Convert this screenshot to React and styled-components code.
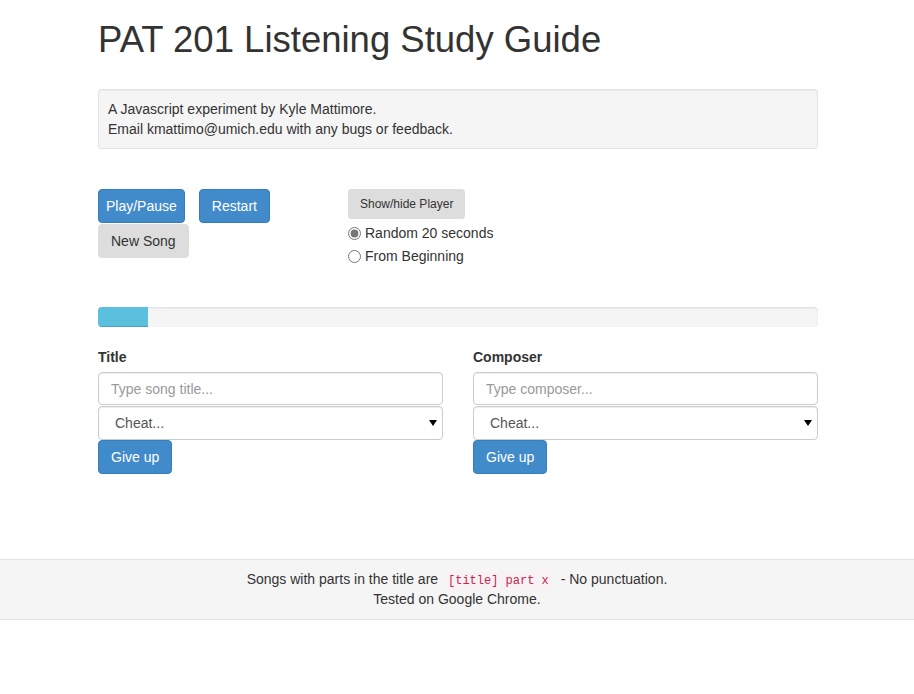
import React from "react";
import styled, { createGlobalStyle } from "styled-components";

const Global = createGlobalStyle`
  html, body { margin: 0; padding: 0; background: #fff; }
  body {
    font-family: "Liberation Sans", Arial, sans-serif;
    font-size: 14px;
    line-height: 1.428571;
    color: #333;
  }
  * { box-sizing: border-box; }
`;

const Container = styled.div`
  width: 720px;
  margin-left: calc(50% - 359px);
`;

const Title = styled.h1`
  font-size: 36.5px;
  font-weight: 500;
  line-height: 40px;
  margin: 20px 0 0;
  color: #333;
`;

const Well = styled.div`
  margin-top: 29px;
  padding: 9px;
  background: #f5f5f5;
  border: 1px solid #e3e3e3;
  border-radius: 3px;
  box-shadow: inset 0 1px 1px rgba(0, 0, 0, 0.05);
  line-height: 20px;
`;

const Controls = styled.div`
  display: grid;
  grid-template-columns: 220px 1fr;
  column-gap: 30px;
  margin-top: 40px;
`;

const ButtonWrap = styled.div`
  display: flex;
  flex-wrap: wrap;
  column-gap: 14px;
  row-gap: 1px;
  align-items: flex-start;
  align-content: flex-start;
`;

const Btn = styled.button`
  font-family: inherit;
  font-size: ${(p) => (p.$small ? "12px" : "14px")};
  line-height: ${(p) => (p.$small ? "18px" : "20px")};
  padding: ${(p) => (p.$small ? "5px 11px" : p.$tight ? "6px 7px" : "6px 12px")};
  border-radius: ${(p) => (p.$small ? "3px" : "4px")};
  border: 1px solid ${(p) => (p.$primary ? "#357ebd" : "#dddddd")};
  background: ${(p) => (p.$primary ? "#428bca" : "#dddddd")};
  color: ${(p) => (p.$primary ? "#fff" : "#333")};
  cursor: pointer;
  white-space: nowrap;
  margin: 0;
`;

const PlayerCol = styled.div`
  display: flex;
  flex-direction: column;
  align-items: flex-start;
`;

const RadioGroup = styled.div`
  margin-top: 4px;
  display: flex;
  flex-direction: column;
  gap: 3px;
`;

const RadioLabel = styled.label`
  display: flex;
  align-items: center;
  gap: 4px;
  line-height: 20px;
  input {
    margin: 0;
    width: 13px;
    height: 13px;
    accent-color: #777;
  }
`;

const Progress = styled.div`
  margin-top: 41px;
  height: 20px;
  background: #f5f5f5;
  border-radius: 4px;
  overflow: hidden;
  box-shadow: inset 0 1px 2px rgba(0, 0, 0, 0.1);
`;

const Bar = styled.div`
  height: 100%;
  background: #5bc0de;
  box-shadow: inset 0 -1px 0 rgba(0, 0, 0, 0.15);
`;

const Fields = styled.div`
  display: grid;
  grid-template-columns: 1fr 1fr;
  column-gap: 30px;
  margin-top: 20px;
`;

const Field = styled.div`
  display: flex;
  flex-direction: column;
  align-items: flex-start;
`;

const Label = styled.label`
  font-weight: bold;
  margin-bottom: 5px;
  line-height: 20px;
`;

const Input = styled.input`
  width: 100%;
  height: 33px;
  padding: 6px 12px;
  margin: 0;
  font-family: inherit;
  font-size: 14px;
  color: #555;
  border: 1px solid #ccc;
  border-radius: 4px;
  box-shadow: inset 0 1px 1px rgba(0, 0, 0, 0.075);
  &::placeholder { color: #999; }
`;

const Select = styled.select`
  width: 100%;
  height: 34px;
  margin: 1px 0 0;
  padding: 6px 12px 6px 16px;
  font-family: inherit;
  font-size: 14px;
  color: #555;
  background: #fff;
  border: 1px solid #ccc;
  border-radius: 4px;
  box-shadow: inset 0 1px 1px rgba(0, 0, 0, 0.075);
  appearance: none;
  background-image: url("data:image/svg+xml;utf8,<svg xmlns='http://www.w3.org/2000/svg' width='8' height='6'><path d='M0 0h8L4 6z' fill='black'/></svg>");
  background-repeat: no-repeat;
  background-position: right 5px center;
`;

const Footer = styled.div`
  margin-top: 85px;
  background: #f5f5f5;
  border-top: 1px solid #e3e3e3;
  border-bottom: 1px solid #e3e3e3;
  padding: 9px 0 10px;
  text-align: center;
  line-height: 20px;
`;

const Code = styled.code`
  font-family: "Liberation Mono", "DejaVu Sans Mono", monospace;
  font-size: 12px;
  line-height: 1;
  color: #c7254e;
  background: #f9f2f4;
  padding: 2px 4px;
  border-radius: 4px;
  margin: 0 4px 0 2px;
`;

export default function App() {
  return (
    <>
      <Global />
      <Container>
        <Title>PAT 201 Listening Study Guide</Title>
        <Well>
          A Javascript experiment by Kyle Mattimore.
          <br />
          Email kmattimo@umich.edu with any bugs or feedback.
        </Well>
        <Controls>
          <ButtonWrap>
            <Btn $primary $tight>Play/Pause</Btn>
            <Btn $primary>Restart</Btn>
            <Btn>New Song</Btn>
          </ButtonWrap>
          <PlayerCol>
            <Btn $small>Show/hide Player</Btn>
            <RadioGroup>
              <RadioLabel>
                <input type="radio" name="mode" defaultChecked /> Random 20 seconds
              </RadioLabel>
              <RadioLabel>
                <input type="radio" name="mode" /> From Beginning
              </RadioLabel>
            </RadioGroup>
          </PlayerCol>
        </Controls>
        <Progress>
          <Bar style={{ width: "50px" }} />
        </Progress>
        <Fields>
          <Field>
            <Label>Title</Label>
            <Input placeholder="Type song title..." />
            <Select defaultValue="">
              <option value="">Cheat...</option>
            </Select>
            <Btn $primary>Give up</Btn>
          </Field>
          <Field>
            <Label>Composer</Label>
            <Input placeholder="Type composer..." />
            <Select defaultValue="">
              <option value="">Cheat...</option>
            </Select>
            <Btn $primary>Give up</Btn>
          </Field>
        </Fields>
      </Container>
      <Footer>
        Songs with parts in the title are <Code>[title] part x</Code> - No punctuation.
        <br />
        Tested on Google Chrome.
      </Footer>
    </>
  );
}
